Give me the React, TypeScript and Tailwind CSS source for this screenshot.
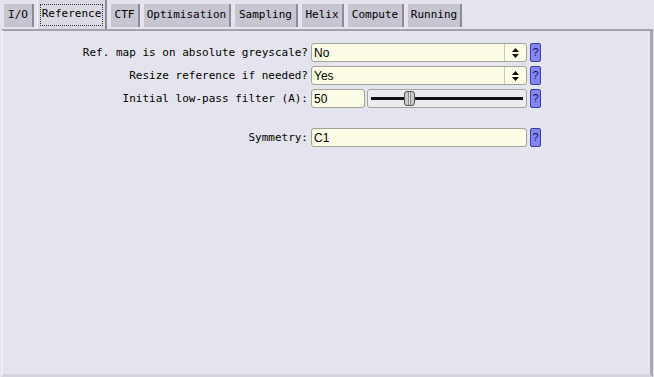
import React from 'react';

const tabs = [
  { name: 'I/O', w: 'w-[31px]' },
  { name: 'Reference', w: 'w-[70px]' },
  { name: 'CTF', w: 'w-[30px]' },
  { name: 'Optimisation', w: 'w-[88px]' },
  { name: 'Sampling', w: 'w-[64px]' },
  { name: 'Helix', w: 'w-[43px]' },
  { name: 'Compute', w: 'w-[57px]' },
  { name: 'Running', w: 'w-[55px]' },
];

const mono = "font-['DejaVu_Sans_Mono','Liberation_Mono',monospace]";
const sans = "font-['Liberation_Sans','DejaVu_Sans',sans-serif]";

function HelpButton() {
  return (
    <div className={`ml-[3px] w-[11px] h-[19px] rounded-[2px] border border-[#3c3c9c] bg-[#8585f5] flex items-center justify-center text-[11px] leading-none text-[#10104a] ${sans}`}>
      ?
    </div>
  );
}

function Label({ text }: { text: string }) {
  return (
    <div className={`w-[308px] pr-[3px] text-right text-[11px] leading-none text-black ${mono}`}>{text}</div>
  );
}

function SelectRow({ label, value }: { label: string; value: string }) {
  return (
    <div className="flex items-center h-[19px]">
      <Label text={label} />
      <div className="w-[216px] h-[19px] flex rounded-[3px] border border-[#a4a49c] bg-[#fdfce4]">
        <div className={`flex-1 pl-[2px] flex items-center text-[12px] text-black ${sans}`}>{value}</div>
        <div className="w-[22px] border-l border-[#c8c8c0] flex flex-col items-center justify-center gap-[2px]">
          <svg width="7" height="4" viewBox="0 0 7 4"><path d="M0 4 L3.5 0 L7 4 Z" fill="#111" /></svg>
          <svg width="7" height="4" viewBox="0 0 7 4"><path d="M0 0 L3.5 4 L7 0 Z" fill="#111" /></svg>
        </div>
      </div>
      <HelpButton />
    </div>
  );
}

export default function App() {
  return (
    <div className="w-[654px] h-[377px] bg-[#e4e4ee] flex flex-col overflow-hidden">
      {/* Tabs */}
      <div className="h-[29px] flex items-start pl-[3px] gap-[3px]">
        {tabs.map((t) =>
          t.name === 'Reference' ? (
            <div
              key={t.name}
              className={`${t.w} h-[29px] bg-[#dadae2] border-l border-[#f4f4f8] border-r-2 border-r-[#8c8c94] flex items-center justify-center px-[2px]`}
            >
              <div className={`w-full h-[22px] border border-dotted border-[#333] flex items-center justify-center text-[11px] text-black ${mono}`}>
                {t.name}
              </div>
            </div>
          ) : (
            <div
              key={t.name}
              className={`${t.w} mt-[4px] h-[23px] bg-[#c6c6d2] border-l border-[#e6e6ee] border-r-2 border-r-[#8c8c94] flex items-center justify-center text-[11px] text-black ${mono}`}
            >
              {t.name}
            </div>
          )
        )}
      </div>

      {/* Panel */}
      <div className="flex-1 ml-[1px] mr-[1px] border-t-2 border-t-[#a2a2aa] border-r-[3px] border-r-[#a6a6ae] border-l-[2px] border-l-[#f0f0f6] border-b-[3px] border-b-[#d4d4de] bg-[#e4e4ee] pt-[12px] flex flex-col gap-[4px]">
        <SelectRow label="Ref. map is on absolute greyscale?" value="No" />
        <SelectRow label="Resize reference if needed?" value="Yes" />

        <div className="flex items-center h-[19px]">
          <Label text="Initial low-pass filter (A):" />
          <div className={`w-[54px] h-[19px] rounded-[3px] border border-[#a4a49c] bg-[#fdfce4] pl-[2px] flex items-center text-[12px] text-black ${sans}`}>
            50
          </div>
          <div className="ml-[2px] w-[160px] h-[19px] rounded-[3px] border border-[#a4a49c] bg-[#ececf0] relative flex items-center px-[3px]">
            <div className="w-full h-[3px] bg-[#111]" />
            <div className="absolute left-[36px] top-[1px] w-[11px] h-[15px] rounded-[3px] border border-[#555] bg-[#cacaca] flex justify-center">
              <div className="w-[3px] h-full border-x border-[#888] bg-[#e6e6e6]" />
            </div>
          </div>
          <HelpButton />
        </div>

        <div className="flex items-center h-[19px] mt-[16px]">
          <Label text="Symmetry:" />
          <div className={`w-[216px] h-[19px] rounded-[3px] border border-[#a4a49c] bg-[#fdfce4] pl-[2px] flex items-center text-[12px] text-black ${sans}`}>
            C1
          </div>
          <HelpButton />
        </div>
      </div>
    </div>
  );
}
